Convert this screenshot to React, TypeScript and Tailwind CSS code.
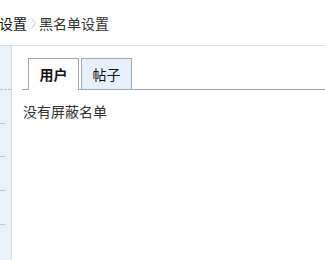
import React from "react";

export default function App() {
  const font = { fontFamily: '"Noto Sans CJK SC", "Noto Sans", sans-serif' };
  return (
    <div className="w-[325px] h-[260px] bg-white overflow-hidden flex flex-col" style={font}>
      <div className="h-[46px] shrink-0 border-b border-[#d9dee3] flex items-start pt-[13px]">
        <span className="text-[14px] leading-[20px] text-[#111] -ml-[1px]">设置</span>
        <svg width="5" height="11" viewBox="0 0 5 11" className="ml-[4px] mr-[3px] mt-[5px]">
          <path d="M0.5 0.5 L4.3 5.5 L0.5 10.5" fill="none" stroke="#c4c4c4" strokeWidth="0.9" />
        </svg>
        <span className="text-[14px] leading-[20px] text-[#333]">黑名单设置</span>
      </div>
      <div className="flex flex-1">
        <div className="w-[12px] shrink-0 bg-[#e8f0f8] border-r border-[#d5dee8] relative">
          <div className="absolute left-0 top-[43px] w-[11px] border-t border-dashed border-[#b8c0c8]" />
          <div className="absolute left-0 top-[77px] w-[5px] h-px bg-[#c0c8d0]" />
          <div className="absolute left-0 top-[110px] w-[5px] h-px bg-[#c0c8d0]" />
          <div className="absolute left-0 top-[144px] w-[5px] h-px bg-[#c0c8d0]" />
          <div className="absolute left-0 top-[178px] w-[5px] h-px bg-[#c0c8d0]" />
        </div>
        <div className="flex-1 pl-[10px] pt-[12px]">
          <div className="flex border-b border-[#9ea8b1] pl-[6px] h-[32px] items-end">
            <div className="w-[51px] h-[32px] border border-b-0 border-[#9ea8b1] bg-white -mb-px flex items-center justify-center text-[14px] font-bold text-[#111] pb-[1px]">
              用户
            </div>
            <div className="w-[51px] h-[31px] ml-[2px] border border-b-0 border-[#9ea8b1] bg-[#e6f0fb] flex items-center justify-center text-[14px] text-[#111]">
              帖子
            </div>
          </div>
          <div className="pl-[1px] pt-[10px] text-[14px] leading-[22px] text-[#333]">没有屏蔽名单</div>
        </div>
      </div>
    </div>
  );
}
